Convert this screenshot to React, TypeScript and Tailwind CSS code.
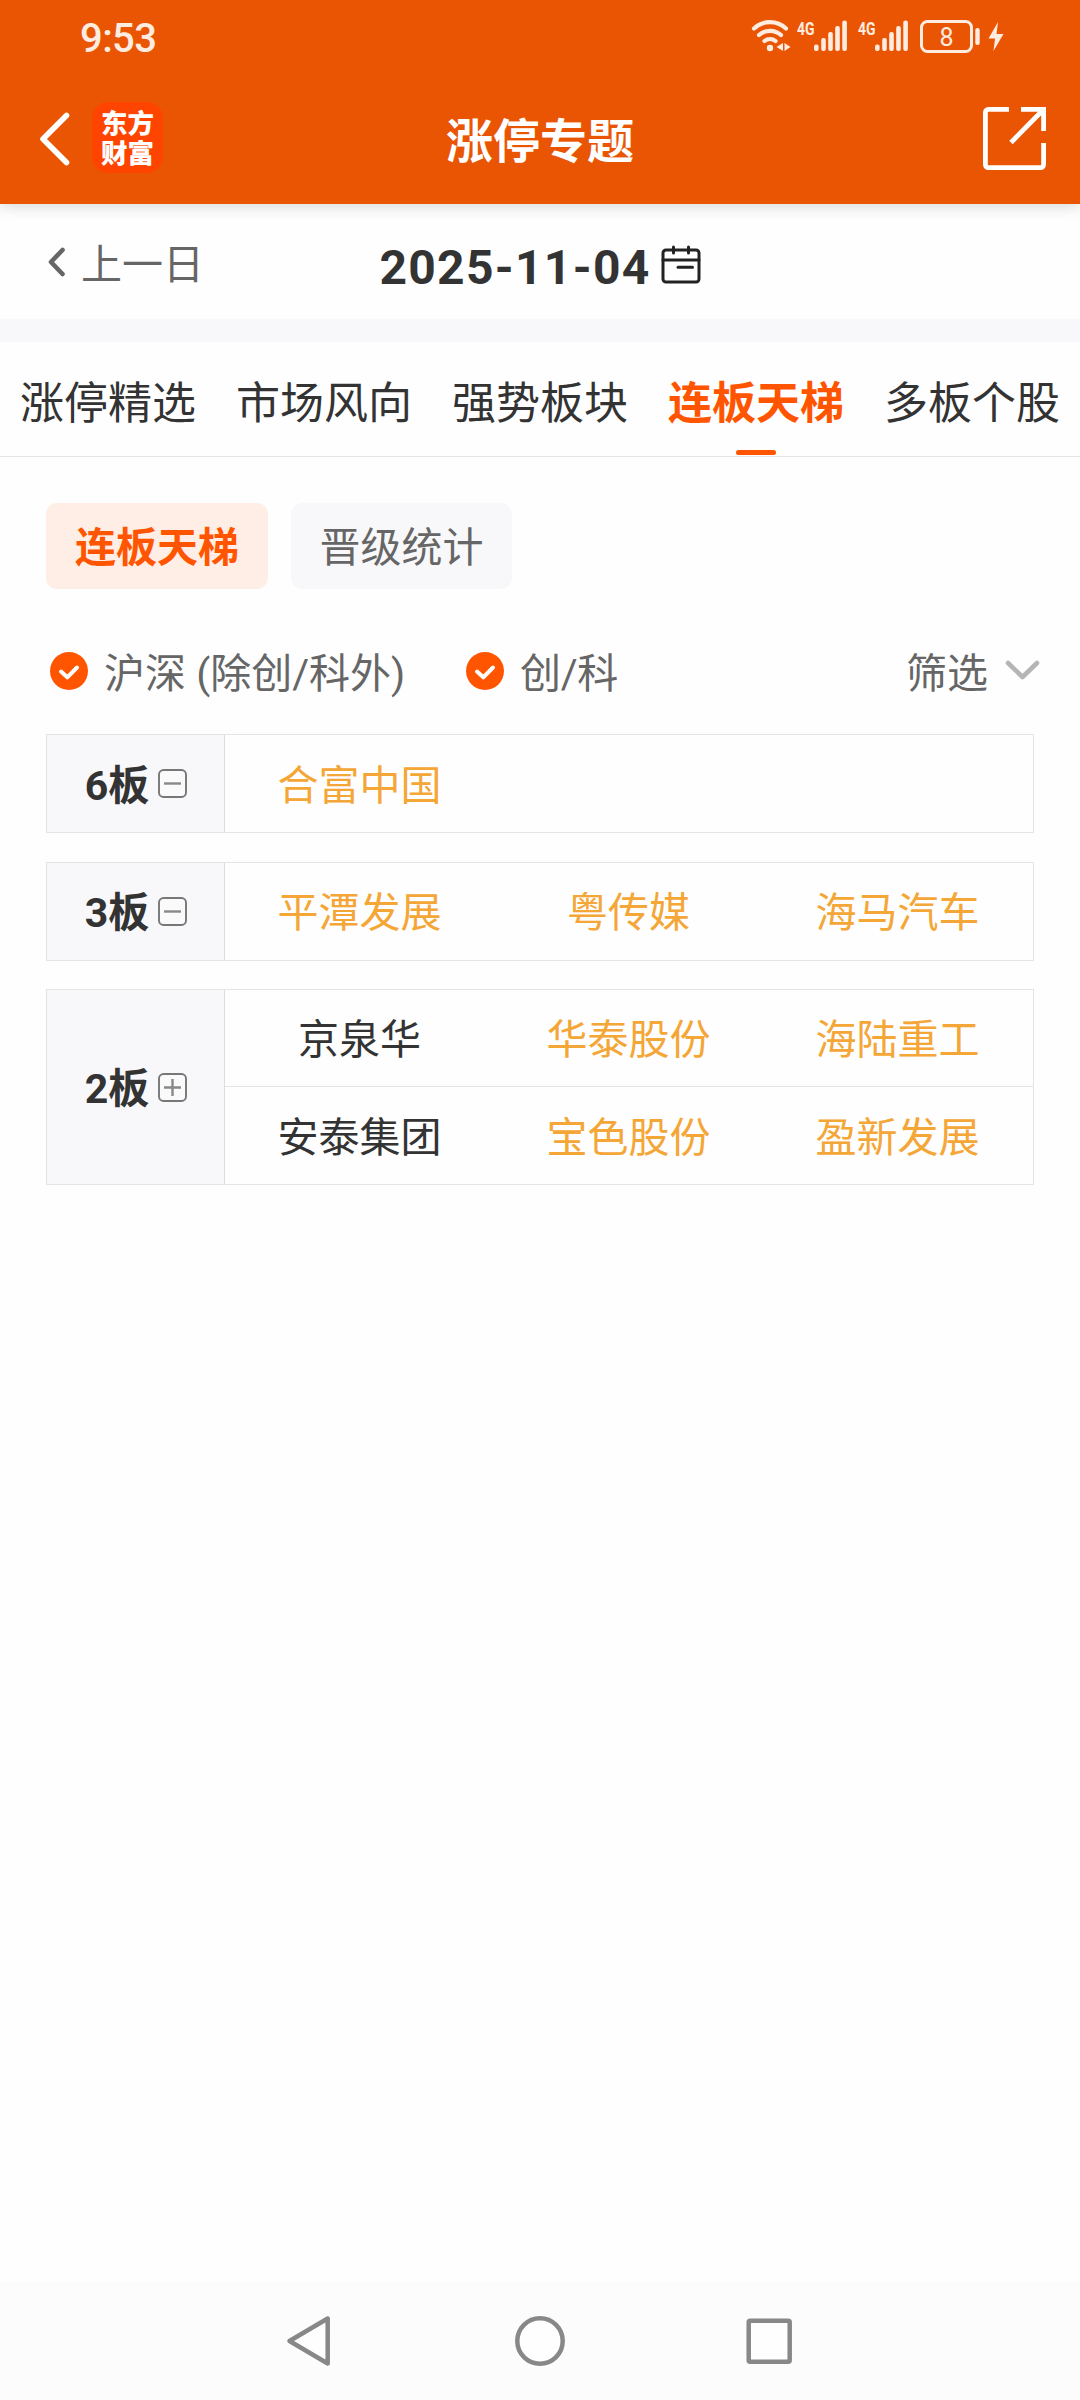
import React from 'react';

interface Stock {
  name: string;
  highlight?: boolean;
}

interface Ladder {
  level: string;
  expandable: boolean;
  rows: Stock[][];
}

const tabs = ['涨停精选', '市场风向', '强势板块', '连板天梯', '多板个股'];

const ladders: Ladder[] = [
  { level: '6', expandable: false, rows: [[{ name: '合富中国', highlight: true }]] },
  {
    level: '3',
    expandable: false,
    rows: [
      [
        { name: '平潭发展', highlight: true },
        { name: '粤传媒', highlight: true },
        { name: '海马汽车', highlight: true },
      ],
    ],
  },
  {
    level: '2',
    expandable: true,
    rows: [
      [{ name: '京泉华' }, { name: '华泰股份', highlight: true }, { name: '海陆重工', highlight: true }],
      [{ name: '安泰集团' }, { name: '宝色股份', highlight: true }, { name: '盈新发展', highlight: true }],
    ],
  },
];

function Signal() {
  return (
    <svg width="52" height="34" viewBox="0 0 52 34" fill="#ffece0" className="shrink-0 overflow-visible">
      <text x="0" y="16.5" fontSize="19" fontWeight="700" fontFamily="Roboto, sans-serif" textLength="17.5" lengthAdjust="spacingAndGlyphs">
        4G
      </text>
      <rect x="17" y="26.5" width="4.6" height="6.5" rx="2" />
      <rect x="24.2" y="20" width="4.6" height="13" rx="2" />
      <rect x="31.2" y="14" width="4.6" height="19" rx="2" />
      <rect x="38.2" y="8" width="4.6" height="25" rx="2" />
      <rect x="45.3" y="2.5" width="4.6" height="30.5" rx="2" />
    </svg>
  );
}

function StatusBar() {
  return (
    <div className="flex h-[74px] items-start justify-between pl-[80px] pr-[74px] pt-[18px]">
      <span className="text-[40px] leading-[42px] font-medium tracking-[-0.6px] text-[#ffece0]">9:53</span>
      <div className="flex">
        <svg width="46" height="34" viewBox="0 0 46 34" fill="none" stroke="#ffece0" strokeWidth="4.2" strokeLinecap="round">
          <path d="M6 10.5a23.5 23.5 0 0 1 32 0" />
          <path d="M11 17a16.5 16.5 0 0 1 22 0" />
          <path d="M16.5 23a8.6 8.6 0 0 1 11 0" />
          <circle cx="22" cy="30" r="3.2" fill="#ffece0" stroke="none" />
          <path d="M35 25v8l-6.5-4zM36.5 25v8l6-4z" fill="#ffece0" stroke="none" />
        </svg>
        <div className="ml-[3px] flex gap-[9px]">
          <Signal />
          <Signal />
        </div>
        <svg width="86" height="36" viewBox="0 0 86 36" fill="none" className="ml-[10px]">
          <rect x="1.5" y="3.5" width="50" height="30" rx="6" stroke="#ffece0" strokeWidth="3" />
          <rect x="55.3" y="10" width="4.4" height="17" rx="2" fill="#ffece0" />
          <text x="26.5" y="27.5" fontSize="25" textAnchor="middle" fill="#ffece0" fontFamily="Roboto, sans-serif">
            8
          </text>
          <path d="M78 4L68.5 20.5H75L73.5 33L83.5 16H76.5z" fill="#ffece0" />
        </svg>
      </div>
    </div>
  );
}

function Header() {
  return (
    <header className="relative z-10 h-[204px] bg-[#ea5504] shadow-[0_2px_14px_rgba(0,0,0,0.16)]">
      <StatusBar />
      <div className="grid h-[130px] grid-cols-[1fr_auto_1fr] items-start">
        <div className="flex pl-[39px] pt-[28px]">
          <svg width="31" height="72" viewBox="0 0 31 72" fill="none" stroke="#fff" strokeWidth="5.6" strokeLinecap="round" strokeLinejoin="round">
            <path d="M27.5 13.5L4 37l23.5 23.5" />
          </svg>
          <div className="ml-[22px] flex h-[71px] w-[71px] flex-col items-center rounded-[16px] bg-[#ff4400] pt-[7px] text-[26.5px] leading-[29.5px] font-black text-white">
            <span>东方</span>
            <span>财富</span>
          </div>
        </div>
        <h1 className="pt-[33px] text-[47px] leading-[70px] font-bold text-white">涨停专题</h1>
        <div className="flex justify-end pr-[34px] pt-[33px]">
          <svg width="63" height="63" viewBox="0 0 63 63" fill="none" stroke="#fff" strokeWidth="4.8">
            <path d="M26 2.4H5.4a3 3 0 0 0-3 3v52.2a3 3 0 0 0 3 3h52.2a3 3 0 0 0 3-3V36" />
            <path d="M38 2.4h22.6V24M59.5 3.5L28 35.5" />
          </svg>
        </div>
      </div>
    </header>
  );
}

function DateBar() {
  return (
    <div className="grid h-[115px] grid-cols-[1fr_auto_1fr] items-start">
      <div className="flex pl-[47px] pt-[29px] text-[#666]">
        <svg width="19" height="58" viewBox="0 0 19 58" fill="none" stroke="currentColor" strokeWidth="4.6" strokeLinecap="round" strokeLinejoin="round">
          <path d="M15.5 17L4 29l11.5 12" />
        </svg>
        <span className="ml-[15px] mt-[2px] text-[41px] leading-[60px]">上一日</span>
      </div>
      <div className="flex pt-[33px]">
        <span className="text-[48px] leading-[62px] font-bold tracking-[1.3px] text-[#333]">2025-11-04</span>
        <svg width="40" height="40" viewBox="0 0 40 40" fill="none" stroke="#222" strokeWidth="3" strokeLinecap="round" className="ml-[10px] mt-[8px]">
          <rect x="2" y="5" width="36" height="32" rx="3" />
          <path d="M2 15h36M12.5 2v6M27.5 2v6M17 22.3h14.5" />
        </svg>
      </div>
      <div />
    </div>
  );
}

function Check() {
  return (
    <svg width="38" height="38" viewBox="0 0 38 38" fill="none" className="shrink-0">
      <circle cx="19" cy="19" r="19" fill="#ff5500" />
      <path d="M11 19.5l6.3 5.8L27 15.5" stroke="#fff" strokeWidth="4" strokeLinecap="round" strokeLinejoin="round" />
    </svg>
  );
}

function ToggleIcon({ plus }: { plus: boolean }) {
  return (
    <svg width="29" height="29" viewBox="0 0 29 29" fill="none" className="ml-[9px]">
      <rect x="1" y="1" width="27" height="27" rx="4.5" fill="#fafafa" stroke="#777" strokeWidth="1.9" />
      <path d={plus ? 'M6 14.5h17M14.5 6v17' : 'M6 14.5h17'} stroke="#888" strokeWidth="2.4" />
    </svg>
  );
}

function LadderTable({ ladder }: { ladder: Ladder }) {
  return (
    <div className="flex border border-[#e3e4e6]">
      <div className="flex w-[178px] items-center justify-center border-r border-[#dcdde0] bg-[#f8f8fa] pl-px">
        <span className="mt-[4px] text-[41px] leading-[60px] font-bold text-[#333]">{ladder.level}板</span>
        <ToggleIcon plus={ladder.expandable} />
      </div>
      <div className="flex-1 divide-y divide-[#e3e4e6]">
        {ladder.rows.map((row, i) => (
          <div key={i} className="grid h-[97px] grid-cols-3 items-center pr-px">
            {row.map((stock) => (
              <span
                key={stock.name}
                className={`mt-[4px] text-center text-[41px] leading-[60px] ${stock.highlight ? 'text-[#f4a636]' : 'text-[#333]'}`}
              >
                {stock.name}
              </span>
            ))}
          </div>
        ))}
      </div>
    </div>
  );
}

function NavBar() {
  return (
    <nav className="flex h-[118px] items-start bg-[#fcfcfc] pl-[284px] pt-[32px]">
      <svg width="512" height="54" viewBox="0 0 512 54" fill="none" stroke="#888" strokeWidth="4.5" strokeLinejoin="round">
        <path d="M43.7 4.5v45L5.5 27z" fill="#fefefe" />
        <circle cx="256" cy="27" r="22.7" fill="#fefefe" />
        <rect x="464.7" y="6.7" width="41" height="41" rx="1.5" fill="#fefefe" />
      </svg>
    </nav>
  );
}

export default function App() {
  return (
    <div className="flex h-[2400px] w-[1080px] flex-col overflow-hidden bg-[#fefefe] font-[Roboto,'Noto_Sans_CJK_SC',sans-serif]">
      <Header />
      <DateBar />
      <div className="h-[23px] bg-[#f8f8fa]" />

      <div className="grid h-[115px] grid-cols-5 border-b border-[#e3e4e6]">
        {tabs.map((tab) => {
          const active = tab === '连板天梯';
          return (
            <button
              key={tab}
              className={`flex flex-col items-center pt-[30px] text-[44px] leading-[64px] whitespace-nowrap ${active ? 'font-bold text-[#ff5500]' : 'text-[#333]'}`}
            >
              {tab}
              {active && <span className="mt-[14px] h-[5px] w-[40px] rounded-full bg-[#ff5500]" />}
            </button>
          );
        })}
      </div>

      <main className="flex-1 px-[46px] pt-[46px]">
        <div className="flex gap-[23px] text-[41px] leading-[60px]">
          <button className="h-[86px] w-[222px] rounded-[11px] bg-[#ffeee6] pt-[4px] font-bold text-[#ff5500]">连板天梯</button>
          <button className="h-[86px] w-[221px] rounded-[11px] bg-[#f8f8fa] pt-[4px] text-[#666]">晋级统计</button>
        </div>

        <div className="mt-[52px] flex h-[60px] items-center pl-[4px] text-[41px] leading-[60px] text-[#666]">
          <Check />
          <span className="ml-[16px] mt-[6px] w-[362px] whitespace-nowrap">沪深 (除创/科外)</span>
          <Check />
          <span className="ml-[16px] mt-[6px] tracking-[-0.3px]">创/科</span>
          <span className="ml-auto mt-[6px]">筛选</span>
          <svg width="35" height="22" viewBox="0 0 35 22" fill="none" stroke="#b5b5b5" strokeWidth="4.6" strokeLinecap="round" strokeLinejoin="round" className="-mr-[6px] ml-[17px]">
            <path d="M3 3l14.5 14L32 3" />
          </svg>
        </div>

        <div className="mt-[33px] flex flex-col gap-[28.5px]">
          {ladders.map((ladder) => (
            <LadderTable key={ladder.level} ladder={ladder} />
          ))}
        </div>
      </main>

      <NavBar />
    </div>
  );
}
